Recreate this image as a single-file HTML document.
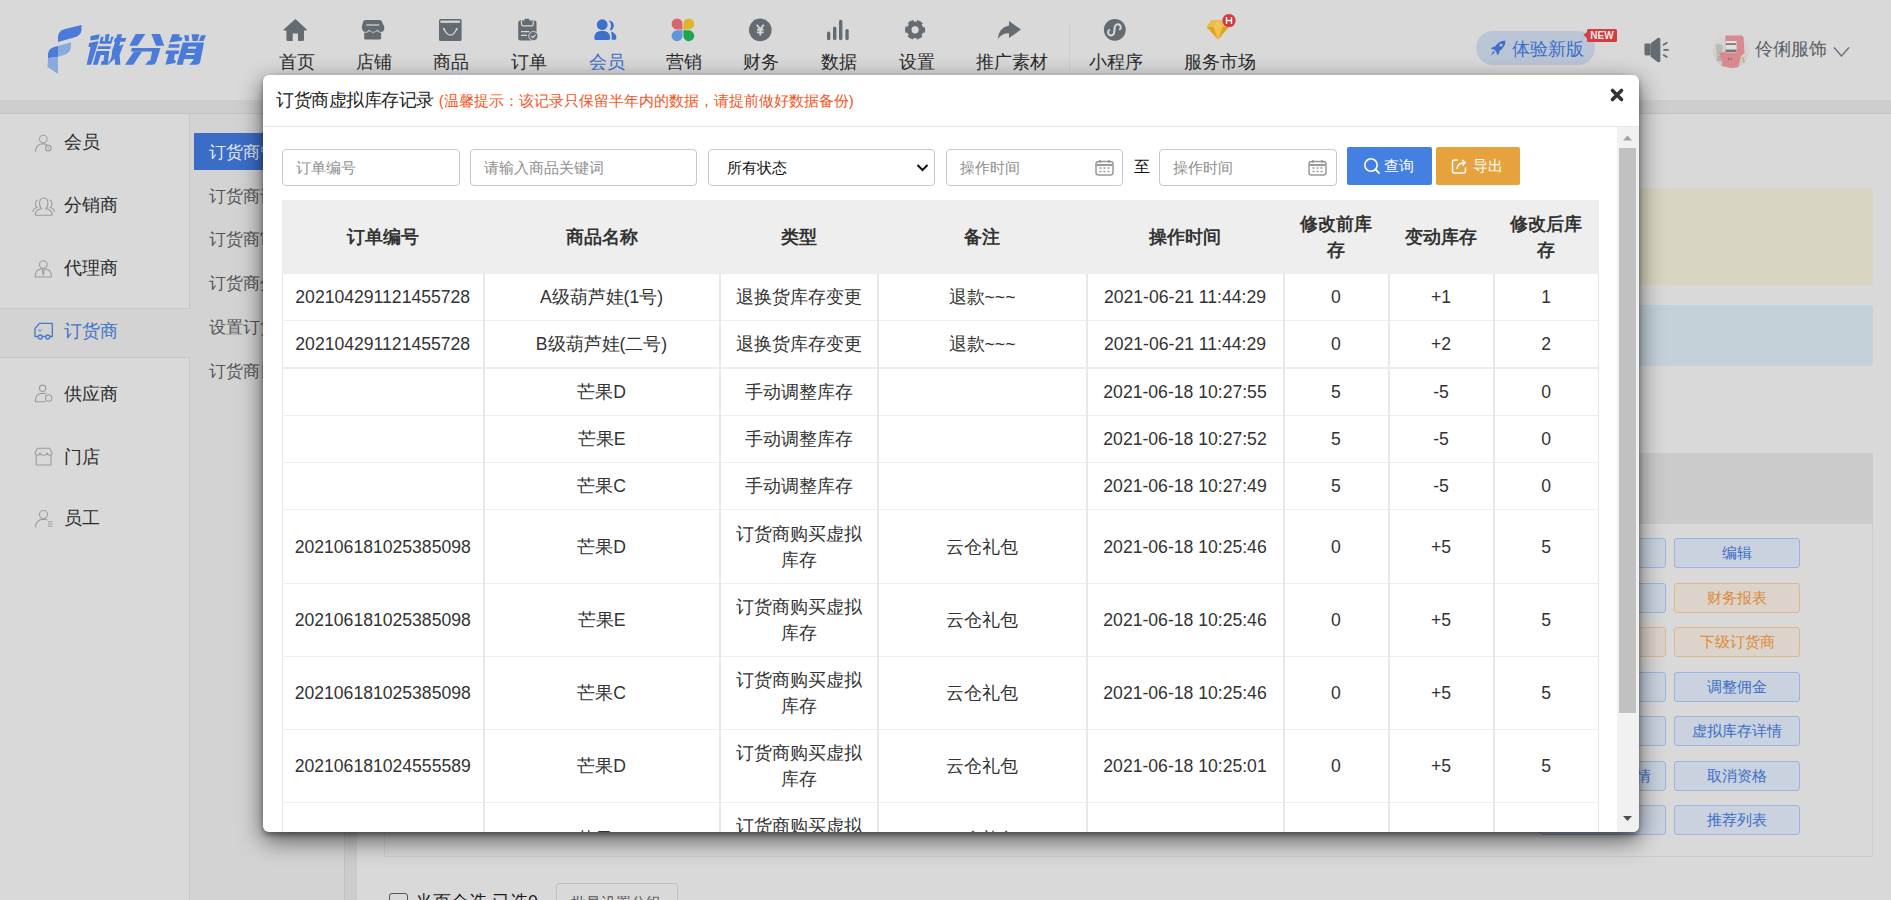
<!DOCTYPE html>
<html><head><meta charset="utf-8">
<style>
*{box-sizing:border-box;margin:0;padding:0}
html,body{width:1891px;height:900px;overflow:hidden}
body{font-family:"Liberation Sans",sans-serif;background:#cccccc;position:relative;color:#333}
.abs{position:absolute}
#hdr{position:absolute;left:0;top:0;width:1891px;height:100px;background:#d9d9d9}
#band{position:absolute;left:0;top:100px;width:1891px;height:14px;background:#cecece;border-bottom:1px solid #c3c3c3}
.nl{position:absolute;top:50px;font-size:18px;line-height:24px;color:#2b2b2b;white-space:nowrap;text-align:center;width:100px}
.ni{position:absolute;top:0}
#side1{position:absolute;left:0;top:114px;width:190px;height:195px;background:#d9d9d9;border-right:1px solid #c6c6c6;border-bottom:1px solid #c6c6c6}
#side2{position:absolute;left:0;top:357px;width:190px;height:560px;background:#d9d9d9;border-right:1px solid #c6c6c6;border-top:1px solid #c6c6c6}
#sub{position:absolute;left:190px;top:114px;width:155px;height:800px;background:#d3d3d3;border-right:1px solid #c4c4c4}
.si{position:absolute;left:64px;font-size:18px;color:#2b2b2b;line-height:24px;white-space:nowrap}
.sub{position:absolute;left:209px;font-size:16.5px;color:#555;line-height:22px;white-space:nowrap}
#content{position:absolute;left:357px;top:114px;width:1534px;height:800px;background:#d9d9d9}
#modal{position:absolute;left:263px;top:75px;width:1376px;height:757px;background:#fff;border-radius:6px;box-shadow:0 3px 5px rgba(0,0,0,.35),0 8px 24px rgba(0,0,0,.6);overflow:hidden}
#mh{position:absolute;left:0;top:0;width:1376px;height:52px;border-bottom:1px solid #e5e5e5}
#mt{position:absolute;left:13px;top:13px;font-size:17.6px;line-height:24px;color:#222;white-space:nowrap}
#mt small{font-size:15px;color:#f5541c}
.rb{position:absolute;width:126px;height:30px;border:1px solid;border-radius:3px;font-size:15.4px;line-height:28px;text-align:center;white-space:nowrap}
.rb.b{background:#c9d2de;border-color:#9bb5dc;color:#3d6ec9}
.rb.o{background:#dcd3cb;border-color:#ddb88e;color:#dc8a36}
.inp{position:absolute;top:74px;height:37px;border:1px solid #c8c8c8;border-radius:4px;font-size:15.4px;color:#8e8e8e;line-height:35px;padding-left:13px;white-space:nowrap}
.btn{position:absolute;top:72px;height:38px;border-radius:2px;color:#fff;font-size:15.4px;line-height:38px;white-space:nowrap}
#tbl{position:absolute;left:19px;top:125px;border-collapse:collapse;table-layout:fixed;width:1316px}
#tbl th{background:#eeeeee;font-weight:bold;font-size:17.6px;color:#333;height:74px;line-height:26px;padding:0 12px;text-align:center;border:none}
#tbl td{font-size:17.6px;color:#333;line-height:26px;padding:10px 10px;text-align:center;border-left:2px solid #e8e8ec;border-bottom:1px solid #eeeeee}
#tbl th:first-child{border-left:1px solid #eee}
#tbl th:last-child{border-right:1px solid #eee}
#tbl td.c0{border-left:1px solid #e6e6e6;}
#tbl td.c7{border-right:1px solid #e6e6e6}
#tbl tr.r6 td{padding-top:11px}
#tbl tr.sep td{border-bottom:2px solid #ebebeb}
#sb{position:absolute;left:1354px;top:52px;width:22px;height:705px;background:#f1f1f1}
.sbrow{position:absolute;left:0;top:309px;width:190px;height:48px;background:#d3d3d3}
</style></head><body>
<div id="hdr">
  <svg class="abs" style="left:0;top:0" width="100" height="100" viewBox="0 0 100 100">
    <path d="M58,42 L58,37 Q58,31 65,29 L81.5,25 L81.5,30 Q81,35.5 74,37.5 Z" fill="#4a7bd9"/>
    <path d="M58,46 L71,42.3 L71,47 Q70.5,53 64,55 L58,56.7 Z" fill="#8aaadd"/>
    <path d="M48,58.3 L48,54 Q48.5,48 55,46.8 L58,46 L58,56.7 Z" fill="#4a7bd9"/>
    <path d="M48,58.3 L58,56.7 L58,74 L47.5,67 Z" fill="#8aaadd"/>
  </svg>
  <svg class="abs" style="left:0;top:0" width="220" height="80" viewBox="0 0 220 80"><g fill="#4a7bd9">
    <g transform="translate(84,30) scale(0.04444)">
      <path d="M150,135 L350,95 L330,210 L140,235 Z"/>
      <path d="M115,290 L330,250 L160,780 L60,780 L148,385 L100,385 Z"/>
      <path d="M345,310 L615,310 L630,250 L360,250 Z M360,250 L420,250 L440,150 L380,150 Z M470,250 L545,250 L580,95 L485,95 Z M590,250 L630,250 L670,150 L610,150 Z"/>
      <path d="M320,365 L605,365 L590,425 L305,425 Z"/>
      <path d="M285,475 L570,475 L540,700 L555,700 L548,780 L375,780 L400,700 L440,700 L455,560 L375,560 L305,780 L200,780 Z"/>
      <path d="M750,95 L860,95 L835,180 L950,180 L925,265 L815,265 L785,420 L650,420 L700,270 L670,270 L700,180 L725,180 Z"/>
      <path d="M640,420 L890,320 L800,560 L820,780 L700,780 L690,640 L545,780 L620,600 Z"/>
    </g>
    <g transform="translate(80,28) scale(0.07139)">
      <path d="M780,85 L915,85 L805,250 L690,250 Z"/>
      <path d="M1000,85 L1120,85 L1180,250 L1065,250 Z"/>
      <path d="M725,280 L1128,280 L1065,480 Q1050,515 1005,515 L910,515 L965,455 L985,455 L1010,330 L715,330 Z"/>
      <path d="M755,330 L870,330 L745,515 L630,515 Z"/>
    </g>
    <g transform="translate(162,30) scale(0.04444)">
      <path d="M230,95 L400,95 L385,150 L460,175 L440,240 L160,280 L195,200 Z"/>
      <path d="M160,320 L400,320 L385,400 L140,400 Z"/>
      <path d="M95,460 L390,460 L370,540 L290,540 L265,670 L310,680 L300,740 L75,780 L140,560 L150,540 L75,540 Z"/>
      <path d="M500,120 L600,120 L610,245 L520,245 Z M665,95 L840,95 L800,250 L690,250 Z M880,120 L990,120 L935,245 L830,245 Z"/>
      <path fill-rule="evenodd" d="M470,280 L945,280 L865,690 Q850,780 770,780 L615,780 L690,700 L710,650 L495,650 L470,780 L330,780 Z M590,370 L775,370 L760,420 L580,420 Z M545,520 L740,520 L725,565 L535,565 Z"/>
    </g>
  </g></svg>

  <svg class="ni" style="left:0" width="1300" height="48" viewBox="0 0 1300 48">
    <g fill="#656b73">
      <!-- home -->
      <path d="M295.4,19 L283.6,29.6 Q283,30.5 284.2,30.5 L286.4,30.5 L286.4,39.5 Q286.4,41 288,41 L292.7,41 L292.7,33.5 L298,33.5 L298,41 L302.5,41 Q304,41 304,39.5 L304,30.5 L306.2,30.5 Q307.4,30.5 306.8,29.6 Z"/>
      <!-- finance -->
      <circle cx="760.3" cy="29.9" r="11.3"/>
      <!-- bars -->
      <rect x="827" y="31.6" width="3.3" height="8.6" rx="1.6"/>
      <rect x="833" y="26.5" width="3.4" height="13.7" rx="1.7"/>
      <rect x="839" y="19.8" width="3.4" height="20.4" rx="1.7"/>
      <rect x="845.4" y="29" width="3.3" height="11.2" rx="1.6"/>
      <!-- gear -->
      <circle cx="915.1" cy="29.8" r="8.4"/>
      <circle cx="915.1" cy="29.8" r="8.8" fill="none" stroke="#656b73" stroke-width="2.4" stroke-dasharray="5.9 3.315" stroke-dashoffset="2.95"/>
      <circle cx="915.1" cy="29.8" r="3.6" fill="#d9d9d9"/>
      <!-- share -->
      <path d="M1009,21 L1021,29.5 L1009,38 L1009,33.2 Q1002,33 997.8,39 Q998.8,27.5 1009,25.6 Z"/>
      <!-- mini program -->
      <circle cx="1114.8" cy="29.8" r="10.9"/>
    </g>
    <!-- store2 -->
    <rect x="364.2" y="29" width="16.9" height="10.6" rx="1.3" fill="#656b73"/>
    <path d="M365.5,20 L379.6,20 Q381.2,20 381.9,21.5 L384,26.2 Q384.6,28 384.2,29.5 Q383.4,32 380.8,32 Q378.3,32 377.5,29.6 Q376.4,32 373.2,32 Q370,32 368.9,29.6 Q368.1,32 365.6,32 Q363,32 362.2,29.5 Q361.6,28 361.9,26.2 L363.2,21.5 Q363.9,20 365.5,20 Z" fill="#656b73" stroke="#d9d9d9" stroke-width="1.3" paint-order="stroke"/>
    <path d="M366.3,25 L379.3,25" stroke="#d9d9d9" stroke-width="1.2"/>
    <!-- bag2 -->
    <rect x="439" y="19" width="22.6" height="22" rx="1.5" fill="#656b73"/>
    <rect x="440.4" y="20.6" width="19.6" height="2.2" fill="#d9d9d9"/>
    <path d="M444,29.3 Q450.35,41 456.7,29.3" stroke="#d9d9d9" stroke-width="1.3" fill="none"/>
    <circle cx="444" cy="29.1" r="1.1" fill="#d9d9d9"/><circle cx="456.7" cy="29.1" r="1.1" fill="#d9d9d9"/>
    <!-- clipboard2 -->
    <rect x="518.2" y="20.6" width="18.3" height="20" rx="2" fill="#656b73"/>
    <rect x="524.4" y="18.8" width="5" height="3" rx="1" fill="#656b73"/>
    <path d="M521.3,21 L521.6,24.8 Q521.7,25.8 522.7,25.8 L532,25.8 Q533,25.8 533.1,24.8 L533.4,21" stroke="#d9d9d9" stroke-width="1.2" fill="none"/>
    <path d="M521,31.7 L529.2,31.7 M521,35.3 L527,35.3" stroke="#d9d9d9" stroke-width="1.2"/>
    <circle cx="533.4" cy="36.1" r="4.6" fill="#656b73" stroke="#d9d9d9" stroke-width="1"/>
    <path d="M531.3,36 L532.9,37.6 L535.6,34.7" stroke="#d9d9d9" stroke-width="1.2" fill="none"/>
    <!-- yen -->
    <path d="M756.8,24.8 L760.3,29.2 L763.8,24.8 M760.3,29.2 L760.3,35.6 M757,29.6 L763.6,29.6 M757,32.4 L763.6,32.4" stroke="#d9d9d9" stroke-width="1.8" fill="none"/>
    <!-- mini program glyph -->
    <path d="M1119.9,29.4 A3,3 0 1 0 1114.8,27.2 L1114.1,32.4 A3,3 0 1 1 1109.2,30.1" stroke="#d9d9d9" stroke-width="2" fill="none" stroke-linecap="round"/>
    <!-- members (blue) -->
    <g fill="#3d70c9">
      <path d="M608.5,20.6 Q613.8,20.8 613.8,25.8 Q613.6,30 609.8,30.6 Q611.5,27 610.8,24 Q610.2,21.8 608.5,20.6 Z"/>
      <path d="M610.8,31.5 Q616.6,33 616.4,38.2 Q616.2,39.8 614.8,39.8 L611.6,39.8 Q612,34 610.8,31.5 Z"/>
      <circle cx="602.2" cy="24.7" r="5.4"/>
      <path d="M594.2,38 Q594.5,30.8 602.2,30.8 Q609.9,30.8 610.2,38 Q610.2,39.9 608.5,39.9 L596,39.9 Q594.2,39.9 594.2,38 Z"/>
    </g>
    <!-- clover -->
    <path d="M682.45,29.40 L677.00,29.40 A5.45,5.45 0 1 1 682.45,23.95 Z" fill="#d9646b"/><path d="M683.35,29.40 L688.80,29.40 A5.45,5.45 0 1 0 683.35,23.95 Z" fill="#e0b42a"/><path d="M682.45,30.30 L677.00,30.30 A5.45,5.45 0 1 0 682.45,35.75 Z" fill="#5f95d9"/><path d="M683.35,30.30 L688.80,30.30 A5.45,5.45 0 1 1 683.35,35.75 Z" fill="#1ea64c"/>
    <!-- diamond -->
    <path d="M1211,20.5 L1224.5,20.5 L1229,27 L1218,39.8 L1206.7,27 Z" fill="#e2a31e"/>
    <path d="M1211,20.5 L1224.5,20.5 L1229,27 L1206.7,27 Z" fill="#edbd49"/>
    <path d="M1213.5,27 L1218,20.5 L1222.5,27 L1218,39.8 Z" fill="#f0c95e" opacity="0.8"/>
    <circle cx="1229" cy="20.5" r="6.6" fill="#d4393e"/>
    <path d="M1226.5,17 L1226.5,24 M1231.5,17 L1231.5,24 M1226.5,20.5 L1231.5,20.5" stroke="#fff" stroke-width="1.4"/>
      </svg>
  <div class="abs" style="left:1069px;top:23px;width:1px;height:47px;background:#cdcdcd"></div>
  <div class="nl" style="left:246.7px">首页</div>
  <div class="nl" style="left:324px">店铺</div>
  <div class="nl" style="left:401px">商品</div>
  <div class="nl" style="left:479px">订单</div>
  <div class="nl" style="left:556.8px;color:#3d6ec9">会员</div>
  <div class="nl" style="left:634px">营销</div>
  <div class="nl" style="left:711.4px">财务</div>
  <div class="nl" style="left:789px">数据</div>
  <div class="nl" style="left:866.6px">设置</div>
  <div class="nl" style="left:961.6px">推广素材</div>
  <div class="nl" style="left:1066px">小程序</div>
  <div class="nl" style="left:1169.8px">服务市场</div>

  <!-- right -->
  <div class="abs" style="left:1476px;top:31px;width:119px;height:34px;border-radius:17px;background:#bac5d6"></div>
  <svg class="abs" style="left:1488px;top:38px" width="20" height="20" viewBox="0 0 20 20">
    <path d="M17.5,2.5 Q11,2.5 7,8.5 L4.5,9 L3,11 L6,11.5 L8.5,14 L9,17 L11,15.5 L11.5,13 Q17.5,9 17.5,2.5 Z" fill="#3d6ec9"/>
    <circle cx="13" cy="7" r="1.6" fill="#bac5d6"/>
    <path d="M5.5,13 L2.5,17.5 L7,14.5 Z" fill="#3d6ec9"/>
  </svg>
  <div class="abs" style="left:1512px;top:37px;font-size:18px;line-height:24px;color:#3d6ec9;white-space:nowrap">体验新版</div>
  <div class="abs" style="left:1587px;top:29px;width:30px;height:13px;background:#d63d3e;border-radius:1.5px;color:#e8e8e8;font-size:10px;line-height:13px;text-align:center;font-weight:bold">NEW</div>
  <svg class="abs" style="left:1583px;top:31px" width="5" height="8"><path d="M4.5,0.5 L0.5,4 L4.5,7.5 Z" fill="#d63d3e"/></svg>
  <svg class="abs" style="left:1639px;top:33px" width="35" height="35" viewBox="0 0 32 32">
    <rect x="5" y="9.5" width="5.5" height="11" rx="1.2" fill="#656b73"/>
    <path d="M10.5,9.6 L17,4.6 Q19.5,3.5 19.5,6 L19.5,25 Q19.5,27.5 17,26.4 L10.5,21.4 Z" fill="#656b73"/>
    <path d="M22.5,10.8 L25.5,9 M23,15.5 L26.5,15.5 M22.5,20.2 L25.5,22" stroke="#656b73" stroke-width="1.6" stroke-linecap="round"/>
  </svg>
  <svg class="abs" style="left:1712px;top:31px" width="38" height="38" viewBox="0 0 38 38">
    <defs><clipPath id="av"><circle cx="19" cy="19.2" r="18.4"/></clipPath>
    <filter id="avb" x="-10%" y="-10%" width="120%" height="120%"><feGaussianBlur stdDeviation="0.45"/></filter>
    <linearGradient id="avg" x1="0" y1="0" x2="0" y2="1"><stop offset="0" stop-color="#dadadc"/><stop offset="0.55" stop-color="#d2d1d1"/><stop offset="1" stop-color="#cbc8c5"/></linearGradient></defs>
    <g clip-path="url(#av)"><g filter="url(#avb)">
      <rect x="-2" y="-2" width="42" height="42" fill="url(#avg)"/>
      <path d="M3.5,14 Q6,11 8,14 Q10,12 11,16 L9,24 L5,25 Z" fill="#a9b3a3" opacity="0.7"/>
      <rect x="5" y="25" width="5" height="5" fill="#b8b0a8"/>
      <path d="M13.5,4.5 L31.5,4.5 L32.5,22 L29,25 L26.5,36 L20,37 L11,35 L7.5,22 L13,20.5 Z" fill="#d8898f"/>
      <rect x="13.5" y="10" width="11" height="11.5" fill="#e2e0e0"/>
      <rect x="14" y="12.3" width="10" height="1.6" fill="#6f6f6f"/>
      <rect x="13.8" y="18.6" width="10.5" height="2.4" fill="#747474"/>
      <path d="M30.5,26 L33,34" stroke="#c9a06a" stroke-width="1.2"/>
      <path d="M10,33 L10.5,36" stroke="#c9a06a" stroke-width="1.2"/>
      <path d="M24.5,36 L25,38" stroke="#c9a06a" stroke-width="1.2"/>
      <circle cx="16.5" cy="28" r="0.7" fill="#555"/><circle cx="19" cy="28" r="0.7" fill="#555"/>
    </g></g>
  </svg>
  <div class="abs" style="left:1755px;top:37px;font-size:18px;line-height:24px;color:#595e66;white-space:nowrap">伶俐服饰</div>
  <svg class="abs" style="left:1832px;top:44px" width="20" height="16"><path d="M2,3.5 L9.5,12 L17,3.5" stroke="#6b707a" stroke-width="1.4" fill="none"/></svg>
</div>
<div id="band"></div>

<div id="side1"></div>
<div id="side2"></div>
<div class="sbrow"></div>
<div id="sub"></div>
<svg class="abs" style="left:0;top:114px" width="190" height="786" viewBox="0 114 190 786">
  <g fill="none" stroke="#9c9c9c" stroke-width="1.1">
    <circle cx="43.3" cy="139" r="3.8"/>
    <path d="M35.3,151.7 Q36,144 43.3,143.8 Q45.5,143.8 47,144.8"/>
    <circle cx="48.3" cy="148.2" r="2.8"/>
    <path d="M48.3,147 L48.3,149.6" stroke-width="0.8"/>
    <!-- distributor -->
    <path d="M39.5,203.5 Q39.5,198 43.7,198 Q47.9,198 47.9,203.5 Q47.9,207 45.8,208.6 Q52,210 52,214 L52,215.3 L35.4,215.3 L35.4,214 Q35.4,210 41.6,208.6 Q39.5,207 39.5,203.5 Z"/>
    <path d="M38,200 Q35.5,200 35.5,204 Q35.5,206.5 37,207.5 Q33,208.5 33,212"/>
    <path d="M49.4,200 Q51.9,200 51.9,204 Q51.9,206.5 50.4,207.5 Q54.4,208.5 54.4,212"/>
    <!-- agent -->
    <circle cx="43.3" cy="264.6" r="3.8"/>
    <path d="M35.3,277 L35.3,275 Q35.5,269 43.3,268.8 Q51.1,269 51.3,275 L51.3,277 Z"/>
    <path d="M42.3,269.5 L43.3,275.5 L44.3,269.5"/>
    <!-- supplier -->
    <circle cx="42.6" cy="388.3" r="3.2"/>
    <path d="M45.8,401.8 L35.5,401.8 L35.5,400 Q35.7,393.5 42.6,393.3 Q44.8,393.3 46.3,394"/>
    <circle cx="48.7" cy="398" r="3.2"/>
    <!-- store -->
    <path d="M35.2,452.5 L37.5,448.3 L49.7,448.3 L52,452.5 Q52,455.3 49.6,455.3 Q47.2,455.3 47.2,452.6 Q47.2,455.3 43.6,455.3 Q40,455.3 40,452.6 Q40,455.3 37.6,455.3 Q35.2,455.3 35.2,452.5 Z"/>
    <path d="M36.2,455.3 L36.2,465 L51,465 L51,455.3"/>
    <!-- staff -->
    <circle cx="43.5" cy="514.5" r="4"/>
    <path d="M35.5,527.3 Q36,519.5 43.5,519.3 Q46,519.3 47.5,520"/>
    <path d="M48,521.8 L52.4,521.8 M48,524 L52.4,524 M48,526.2 L52.4,526.2" stroke-width="0.9"/>
  </g>
  <!-- truck -->
  <g fill="none" stroke="#4a78c8" stroke-width="1.3">
    <path d="M38.5,336.5 L35,336.5 L35,328.5 L39.5,323.3 L52.3,323.3 L52.3,336.5 L49,336.5"/>
    <path d="M42,336.5 L46.3,336.5"/>
    <circle cx="40.3" cy="337" r="2"/>
    <circle cx="47.7" cy="337" r="2"/>
    <path d="M38.5,331 L40,329.2 M39.5,332 L41.8,329.5" stroke-width="0.9"/>
  </g>
</svg>
<div class="si" style="top:130px">会员</div>
<div class="si" style="top:193px">分销商</div>
<div class="si" style="top:255.5px">代理商</div>
<div class="si" style="top:319px;color:#4472c8">订货商</div>
<div class="si" style="top:381.5px">供应商</div>
<div class="si" style="top:444.5px">门店</div>
<div class="si" style="top:506px">员工</div>

<div class="abs" style="left:194px;top:133px;width:160px;height:37px;background:#3b6dc8"></div>
<div class="sub" style="top:140.5px;color:#e6ecf6">订货商管理</div>
<div class="sub" style="top:184.5px">订货商设置</div>
<div class="sub" style="top:227.8px">订货商审核</div>
<div class="sub" style="top:272px">订货商分组</div>
<div class="sub" style="top:316.2px">设置订货商</div>
<div class="sub" style="top:360px">订货商日志</div>

<div id="content"></div>
<!-- right side content -->
<div class="abs" style="left:384px;top:188px;width:1489px;height:97px;background:#d8d5c2;border-radius:3px"></div>
<div class="abs" style="left:384px;top:305px;width:1489px;height:61px;background:#c4d1d9;border-radius:3px"></div>
<div class="abs" style="left:384px;top:453px;width:1489px;height:404px;border:1px solid #cdcdcd;background:#d9d9d9"></div>
<div class="abs" style="left:384px;top:453px;width:1489px;height:71px;background:#cbcbcb"></div>
<div class="rb b" style="left:1540px;top:538px">...</div>
<div class="rb b" style="left:1674px;top:538px">编辑</div>
<div class="rb b" style="left:1540px;top:583px">...</div>
<div class="rb o" style="left:1674px;top:583px">财务报表</div>
<div class="rb o" style="left:1540px;top:627px">...</div>
<div class="rb o" style="left:1674px;top:627px">下级订货商</div>
<div class="rb b" style="left:1540px;top:672px">...</div>
<div class="rb b" style="left:1674px;top:672px">调整佣金</div>
<div class="rb b" style="left:1540px;top:716px">...</div>
<div class="rb b" style="left:1674px;top:716px">虚拟库存详情</div>
<div class="rb b" style="left:1540px;top:761px;text-align:right;padding-right:14px">详情</div>
<div class="rb b" style="left:1674px;top:761px">取消资格</div>
<div class="rb b" style="left:1540px;top:805px">...</div>
<div class="rb b" style="left:1674px;top:805px">推荐列表</div>
<div class="abs" style="left:389px;top:893px;width:19px;height:19px;border:1.5px solid #555;border-radius:3px"></div>
<div class="abs" style="left:415px;top:890px;font-size:17.6px;line-height:24px;color:#1a1a1a;white-space:nowrap">当页全选 已选0</div>
<div class="abs" style="left:556px;top:883px;width:122px;height:34px;border:1px solid #c0c0c0;border-radius:3px;background:#d9d9d9"></div>
<div class="abs" style="left:571px;top:893px;font-size:15.4px;line-height:20px;color:#555;white-space:nowrap">批量设置分组</div>

<div id="modal">
  <div id="mh"><div id="mt"><span style="letter-spacing:-0.45px">订货商虚拟库存记录</span> <small>(温馨提示：该记录只保留半年内的数据，请提前做好数据备份)</small></div>
    <svg class="abs" style="left:1346px;top:12px" width="16" height="16" viewBox="0 0 16 16"><path d="M3.5,3.5 L12.5,12.5 M12.5,3.5 L3.5,12.5" stroke="#333" stroke-width="3.6" stroke-linecap="round"/></svg>
  </div>
  <div class="inp" style="left:19px;width:178px">订单编号</div>
  <div class="inp" style="left:207px;width:227px">请输入商品关键词</div>
  <div class="inp" style="left:445px;width:227px;color:#111;padding-left:18px">所有状态
    <svg class="abs" style="left:207px;top:12px" width="14" height="12" viewBox="0 0 14 12"><path d="M1.5,3 L6.5,8 L11.5,3" stroke="#111" stroke-width="2" fill="none"/></svg></div>
  <div class="inp" style="left:683px;width:177px">操作时间
    <svg class="abs" style="left:148px;top:9px" width="19" height="17" viewBox="0 0 19 17"><rect x="1" y="2.5" width="17" height="13.5" rx="2.5" fill="none" stroke="#999" stroke-width="1.5"/><path d="M1.5,6 L17.5,6" stroke="#999" stroke-width="2"/><path d="M5,1 L5,4 M14,1 L14,4" stroke="#999" stroke-width="1.6"/><path d="M4.5,9 h2 M8.5,9 h2 M12.5,9 h2 M4.5,12.5 h2 M8.5,12.5 h2 M12.5,12.5 h2" stroke="#999" stroke-width="1.4"/></svg></div>
  <div class="abs" style="left:871px;top:81px;font-size:16px;line-height:22px;color:#111">至</div>
  <div class="inp" style="left:896px;width:178px">操作时间
    <svg class="abs" style="left:148px;top:9px" width="19" height="17" viewBox="0 0 19 17"><rect x="1" y="2.5" width="17" height="13.5" rx="2.5" fill="none" stroke="#999" stroke-width="1.5"/><path d="M1.5,6 L17.5,6" stroke="#999" stroke-width="2"/><path d="M5,1 L5,4 M14,1 L14,4" stroke="#999" stroke-width="1.6"/><path d="M4.5,9 h2 M8.5,9 h2 M12.5,9 h2 M4.5,12.5 h2 M8.5,12.5 h2 M12.5,12.5 h2" stroke="#999" stroke-width="1.4"/></svg></div>
  <div class="btn" style="left:1084px;width:85px;background:#4380e2">
    <svg class="abs" style="left:16px;top:10px" width="19" height="19" viewBox="0 0 19 19"><circle cx="8" cy="8" r="6.2" fill="none" stroke="#fff" stroke-width="1.6"/><path d="M12.5,12.5 L16,16" stroke="#fff" stroke-width="1.8" stroke-linecap="round"/></svg>
    <span class="abs" style="left:37px;top:0">查询</span></div>
  <div class="btn" style="left:1173px;width:84px;background:#e6a33d">
    <svg class="abs" style="left:14px;top:10px" width="19" height="19" viewBox="0 0 19 19"><path d="M8,3 L4.5,3 Q2.5,3 2.5,5 L2.5,14 Q2.5,16 4.5,16 L13.5,16 Q15.5,16 15.5,14 L15.5,10.5" fill="none" stroke="#fff" stroke-width="1.5"/><path d="M7,12 Q7.5,6 14.5,5.5 M12,3 L15,5.5 L12.5,8.5" fill="none" stroke="#fff" stroke-width="1.5"/></svg>
    <span class="abs" style="left:37px;top:0">导出</span></div>
  <table id="tbl">
    <colgroup><col style="width:201px"><col style="width:236px"><col style="width:158px"><col style="width:209px"><col style="width:197px"><col style="width:105px"><col style="width:105px"><col style="width:105px"></colgroup>
    <tr><th>订单编号</th><th>商品名称</th><th>类型</th><th>备注</th><th>操作时间</th><th>修改前库存</th><th>变动库存</th><th>修改后库存</th></tr>
    <tr><td class="c0">202104291121455728</td><td class="c1">A级葫芦娃(1号)</td><td class="c2">退换货库存变更</td><td class="c3">退款~~~</td><td class="c4">2021-06-21 11:44:29</td><td class="c5">0</td><td class="c6">+1</td><td class="c7">1</td></tr>
    <tr class="sep"><td class="c0">202104291121455728</td><td class="c1">B级葫芦娃(二号)</td><td class="c2">退换货库存变更</td><td class="c3">退款~~~</td><td class="c4">2021-06-21 11:44:29</td><td class="c5">0</td><td class="c6">+2</td><td class="c7">2</td></tr>
    <tr><td class="c0"></td><td class="c1">芒果D</td><td class="c2">手动调整库存</td><td class="c3"></td><td class="c4">2021-06-18 10:27:55</td><td class="c5">5</td><td class="c6">-5</td><td class="c7">0</td></tr>
    <tr><td class="c0"></td><td class="c1">芒果E</td><td class="c2">手动调整库存</td><td class="c3"></td><td class="c4">2021-06-18 10:27:52</td><td class="c5">5</td><td class="c6">-5</td><td class="c7">0</td></tr>
    <tr><td class="c0"></td><td class="c1">芒果C</td><td class="c2">手动调整库存</td><td class="c3"></td><td class="c4">2021-06-18 10:27:49</td><td class="c5">5</td><td class="c6">-5</td><td class="c7">0</td></tr>
    <tr class="r6"><td class="c0">202106181025385098</td><td class="c1">芒果D</td><td class="c2">订货商购买虚拟库存</td><td class="c3">云仓礼包</td><td class="c4">2021-06-18 10:25:46</td><td class="c5">0</td><td class="c6">+5</td><td class="c7">5</td></tr>
    <tr><td class="c0">202106181025385098</td><td class="c1">芒果E</td><td class="c2">订货商购买虚拟库存</td><td class="c3">云仓礼包</td><td class="c4">2021-06-18 10:25:46</td><td class="c5">0</td><td class="c6">+5</td><td class="c7">5</td></tr>
    <tr><td class="c0">202106181025385098</td><td class="c1">芒果C</td><td class="c2">订货商购买虚拟库存</td><td class="c3">云仓礼包</td><td class="c4">2021-06-18 10:25:46</td><td class="c5">0</td><td class="c6">+5</td><td class="c7">5</td></tr>
    <tr><td class="c0">202106181024555589</td><td class="c1">芒果D</td><td class="c2">订货商购买虚拟库存</td><td class="c3">云仓礼包</td><td class="c4">2021-06-18 10:25:01</td><td class="c5">0</td><td class="c6">+5</td><td class="c7">5</td></tr>
    <tr><td class="c0">202106181024555589</td><td class="c1">芒果D</td><td class="c2">订货商购买虚拟库存</td><td class="c3">云仓礼包</td><td class="c4">2021-06-18 10:25:01</td><td class="c5">0</td><td class="c6">+5</td><td class="c7">5</td></tr>
  </table>
  <div id="sb">
    <svg class="abs" style="left:0;top:0" width="21" height="22"><path d="M10.5,8.5 L15,13.5 L6,13.5 Z" fill="#a3a3a3"/></svg>
    <div class="abs" style="left:2px;top:21px;width:17px;height:565px;background:#c1c1c1"></div>
    <svg class="abs" style="left:0;top:680px" width="21" height="22"><path d="M6,9 L15,9 L10.5,14 Z" fill="#505050"/></svg>
  </div>
</div>
</body></html>
